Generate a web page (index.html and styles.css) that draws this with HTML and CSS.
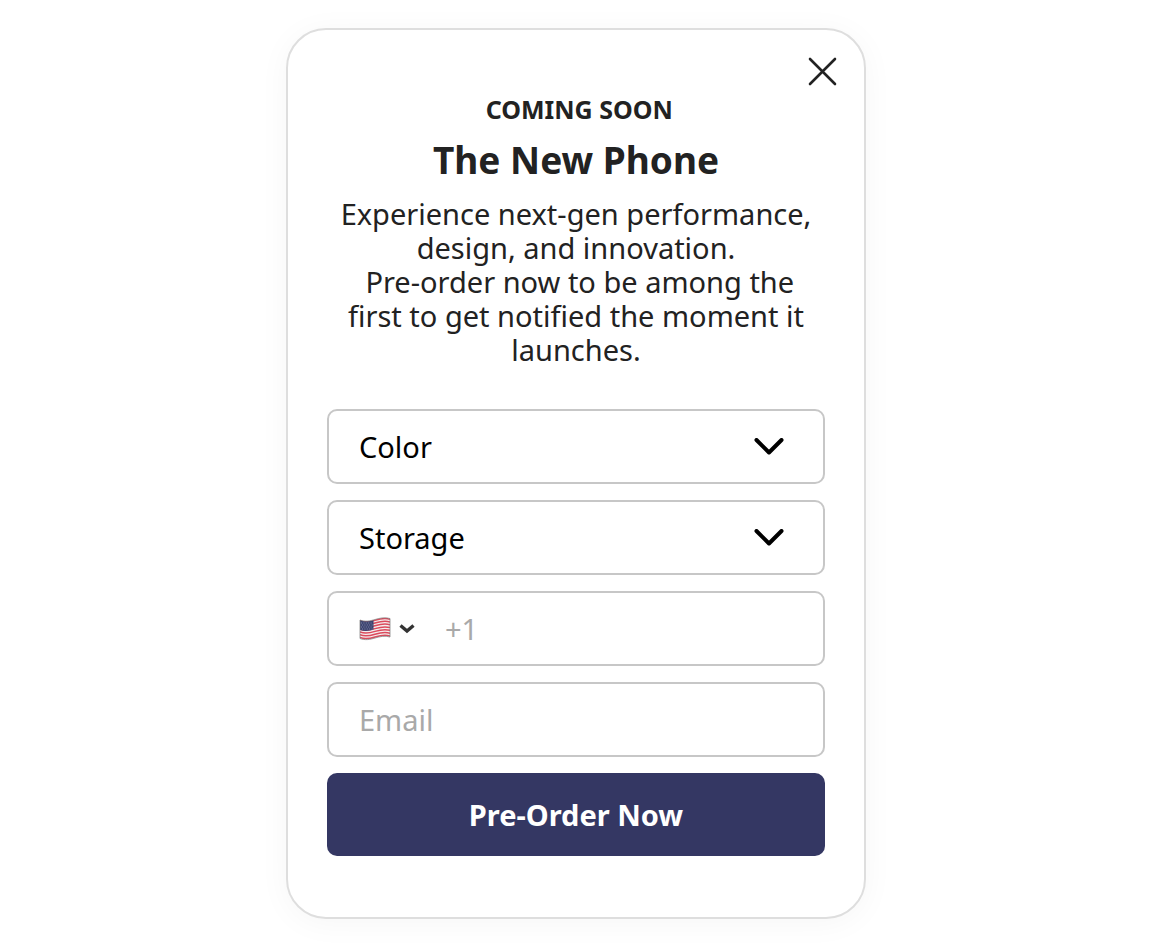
FILE: index.html
```html
<!DOCTYPE html>
<html lang="en">
<head>
<meta charset="utf-8" />
<meta name="viewport" content="width=device-width, initial-scale=1" />
<title>The New Phone</title>
<link rel="stylesheet" href="styles.css">
</head>
<body>
<main class="popup">
  <button class="close" type="button" aria-label="Close">
    <svg width="32" height="32" viewBox="0 0 32 32"><path d="M3 3L28 28M28 3L3 28" /></svg>
  </button>
  <p class="eyebrow">&nbsp;COMING SOON</p>
  <h1 class="title">The New Phone</h1>
  <p class="intro">Experience next-gen performance, design, and innovation.<br />&nbsp;Pre-order now to be among the first to get notified the moment it launches.</p>
  <form class="form">
    <div class="field">
      <select class="control" aria-label="Color">
        <option>Color</option>
        <option>Black</option>
        <option>Silver</option>
      </select>
      <svg class="chevron" width="30" height="18" viewBox="0 0 30 18"><path d="M2.5 2L15 14.500L27.500 2" /></svg>
    </div>
    <div class="field">
      <select class="control" aria-label="Storage">
        <option>Storage</option>
        <option>128 GB</option>
        <option>256 GB</option>
      </select>
      <svg class="chevron" width="30" height="18" viewBox="0 0 30 18"><path d="M2.5 2L15 14.500L27.500 2" /></svg>
    </div>
    <div class="field">
      <div class="country">
        <svg width="32" height="24" viewBox="0 0 32 24">
          <defs>
            <clipPath id="wave"><path d="M1 3C6 5 11 4 16 2.500S26 0 31 1.500V20C26 18.500 21 19.500 16 21S6 23.500 1 21.500Z" /></clipPath>
          </defs>
          <g clip-path="url(#wave)">
            <rect width="32" height="24" fill="#f4eeee" />
            <g class="stripes">
              <path d="M1 3.700C6 5.700 11 4.700 16 3.200S26 .7 31 2.200" />
              <path d="M1 6.500C6 8.500 11 7.500 16 6S26 3.500 31 5" />
              <path d="M1 9.300C6 11.300 11 10.300 16 8.800S26 6.300 31 7.800" />
              <path d="M1 12.100C6 14.100 11 13.100 16 11.600S26 9.100 31 10.600" />
              <path d="M1 14.900C6 16.900 11 15.900 16 14.400S26 11.900 31 13.400" />
              <path d="M1 17.700C6 19.700 11 18.700 16 17.200S26 14.700 31 16.200" />
              <path d="M1 20.500C6 22.500 11 21.500 16 20S26 17.500 31 19" />
            </g>
            <path d="M1 3C6 5 10 4.300 14.500 3V12.500C10 14 6 14.500 1 13Z" fill="#3d4470" />
            <path class="stars" d="M2 6H14M3 8H14M2 10H14M3 12H14" />
          </g>
          <path class="edge" d="M1 3C6 5 11 4 16 2.500S26 0 31 1.500V20C26 18.500 21 19.500 16 21S6 23.500 1 21.500Z" />
        </svg>
        <svg class="caret" width="16" height="10" viewBox="0 0 16 10"><path d="M1.500 1.500L8 7L14.500 1.500" /></svg>
        <select class="country-select" aria-label="Country">
          <option>US</option>
          <option>CA</option>
        </select>
      </div>
      <input class="control" type="tel" placeholder="+1" aria-label="Phone number" />
    </div>
    <div class="field">
      <input class="control" type="email" placeholder="Email" aria-label="Email" />
    </div>
    <button class="submit" type="submit">Pre-Order Now</button>
  </form>
</main>
</body>
</html>
```

FILE: styles.css
```css
* {
  box-sizing: border-box;
}
body {
  background-color: #fff;
  color: #222;
  font-family: 'Noto Sans', sans-serif;
  margin: 0;
  padding: 28px 16px;
}
.popup {
  background-color: #fff;
  border: 2px solid #dedede;
  border-radius: 40px;
  box-shadow: 0 4px 32px rgba(0, 0, 0, .04);
  margin: 0 auto;
  max-width: 580px;
  padding: 62px 39px 61px;
  position: relative;
  text-align: center;
}
.close {
  background: none;
  border: 0 none;
  cursor: pointer;
  height: 32px;
  padding: 0;
  position: absolute;
  right: 25px;
  top: 26px;
  width: 32px;
}
.close path {
  fill: none;
  stroke: #222;
  stroke-linecap: round;
  stroke-width: 2.6;
}
.eyebrow {
  font-size: 25px;
  font-weight: 700;
  line-height: 34px;
  margin: 0 0 8px;
}
.title {
  font-size: 37px;
  font-weight: 700;
  line-height: 52px;
  margin: 0 0 11px;
}
.intro {
  font-size: 29px;
  line-height: 34px;
  margin: 0 0 42px;
  padding: 0 10px;
}
.form {
  display: grid;
  gap: 16px;
  grid-template-columns: minmax(0, 1fr);
}
.field {
  align-items: center;
  border: 2px solid #c7c7c7;
  border-radius: 10px;
  display: flex;
  height: 75px;
  position: relative;
}
.control {
  -webkit-appearance: none;
  appearance: none;
  background: none;
  border: 0 none;
  color: #000;
  flex: 1;
  font: inherit;
  font-size: 29px;
  height: 100%;
  min-width: 0;
  padding: 0 30px;
}
.control::placeholder {
  color: #a9a9a9;
  opacity: 1;
}
.chevron {
  pointer-events: none;
  position: absolute;
  right: 39px;
}
.chevron path {
  fill: none;
  stroke: #000;
  stroke-linecap: round;
  stroke-linejoin: round;
  stroke-width: 4;
}
.country {
  align-items: center;
  display: flex;
  gap: 8px;
  margin-left: 30px;
  position: relative;
}
.country-select {
  cursor: pointer;
  height: 100%;
  left: 0;
  opacity: 0;
  position: absolute;
  top: 0;
  width: 100%;
}
.stripes path {
  fill: none;
  stroke: #dc4a5c;
  stroke-width: 1.5;
}
.stars {
  fill: none;
  stroke: #9298b5;
  stroke-dasharray: 1 1.4;
  stroke-width: .8;
}
.edge {
  fill: none;
  stroke: #777;
  stroke-width: .7;
}
.caret path {
  fill: none;
  stroke: #333;
  stroke-width: 3.4;
}
.submit {
  background-color: #343763;
  border: 0 none;
  border-radius: 10px;
  color: #fff;
  cursor: pointer;
  font: inherit;
  font-size: 29px;
  font-weight: 700;
  height: 83px;
}
```
